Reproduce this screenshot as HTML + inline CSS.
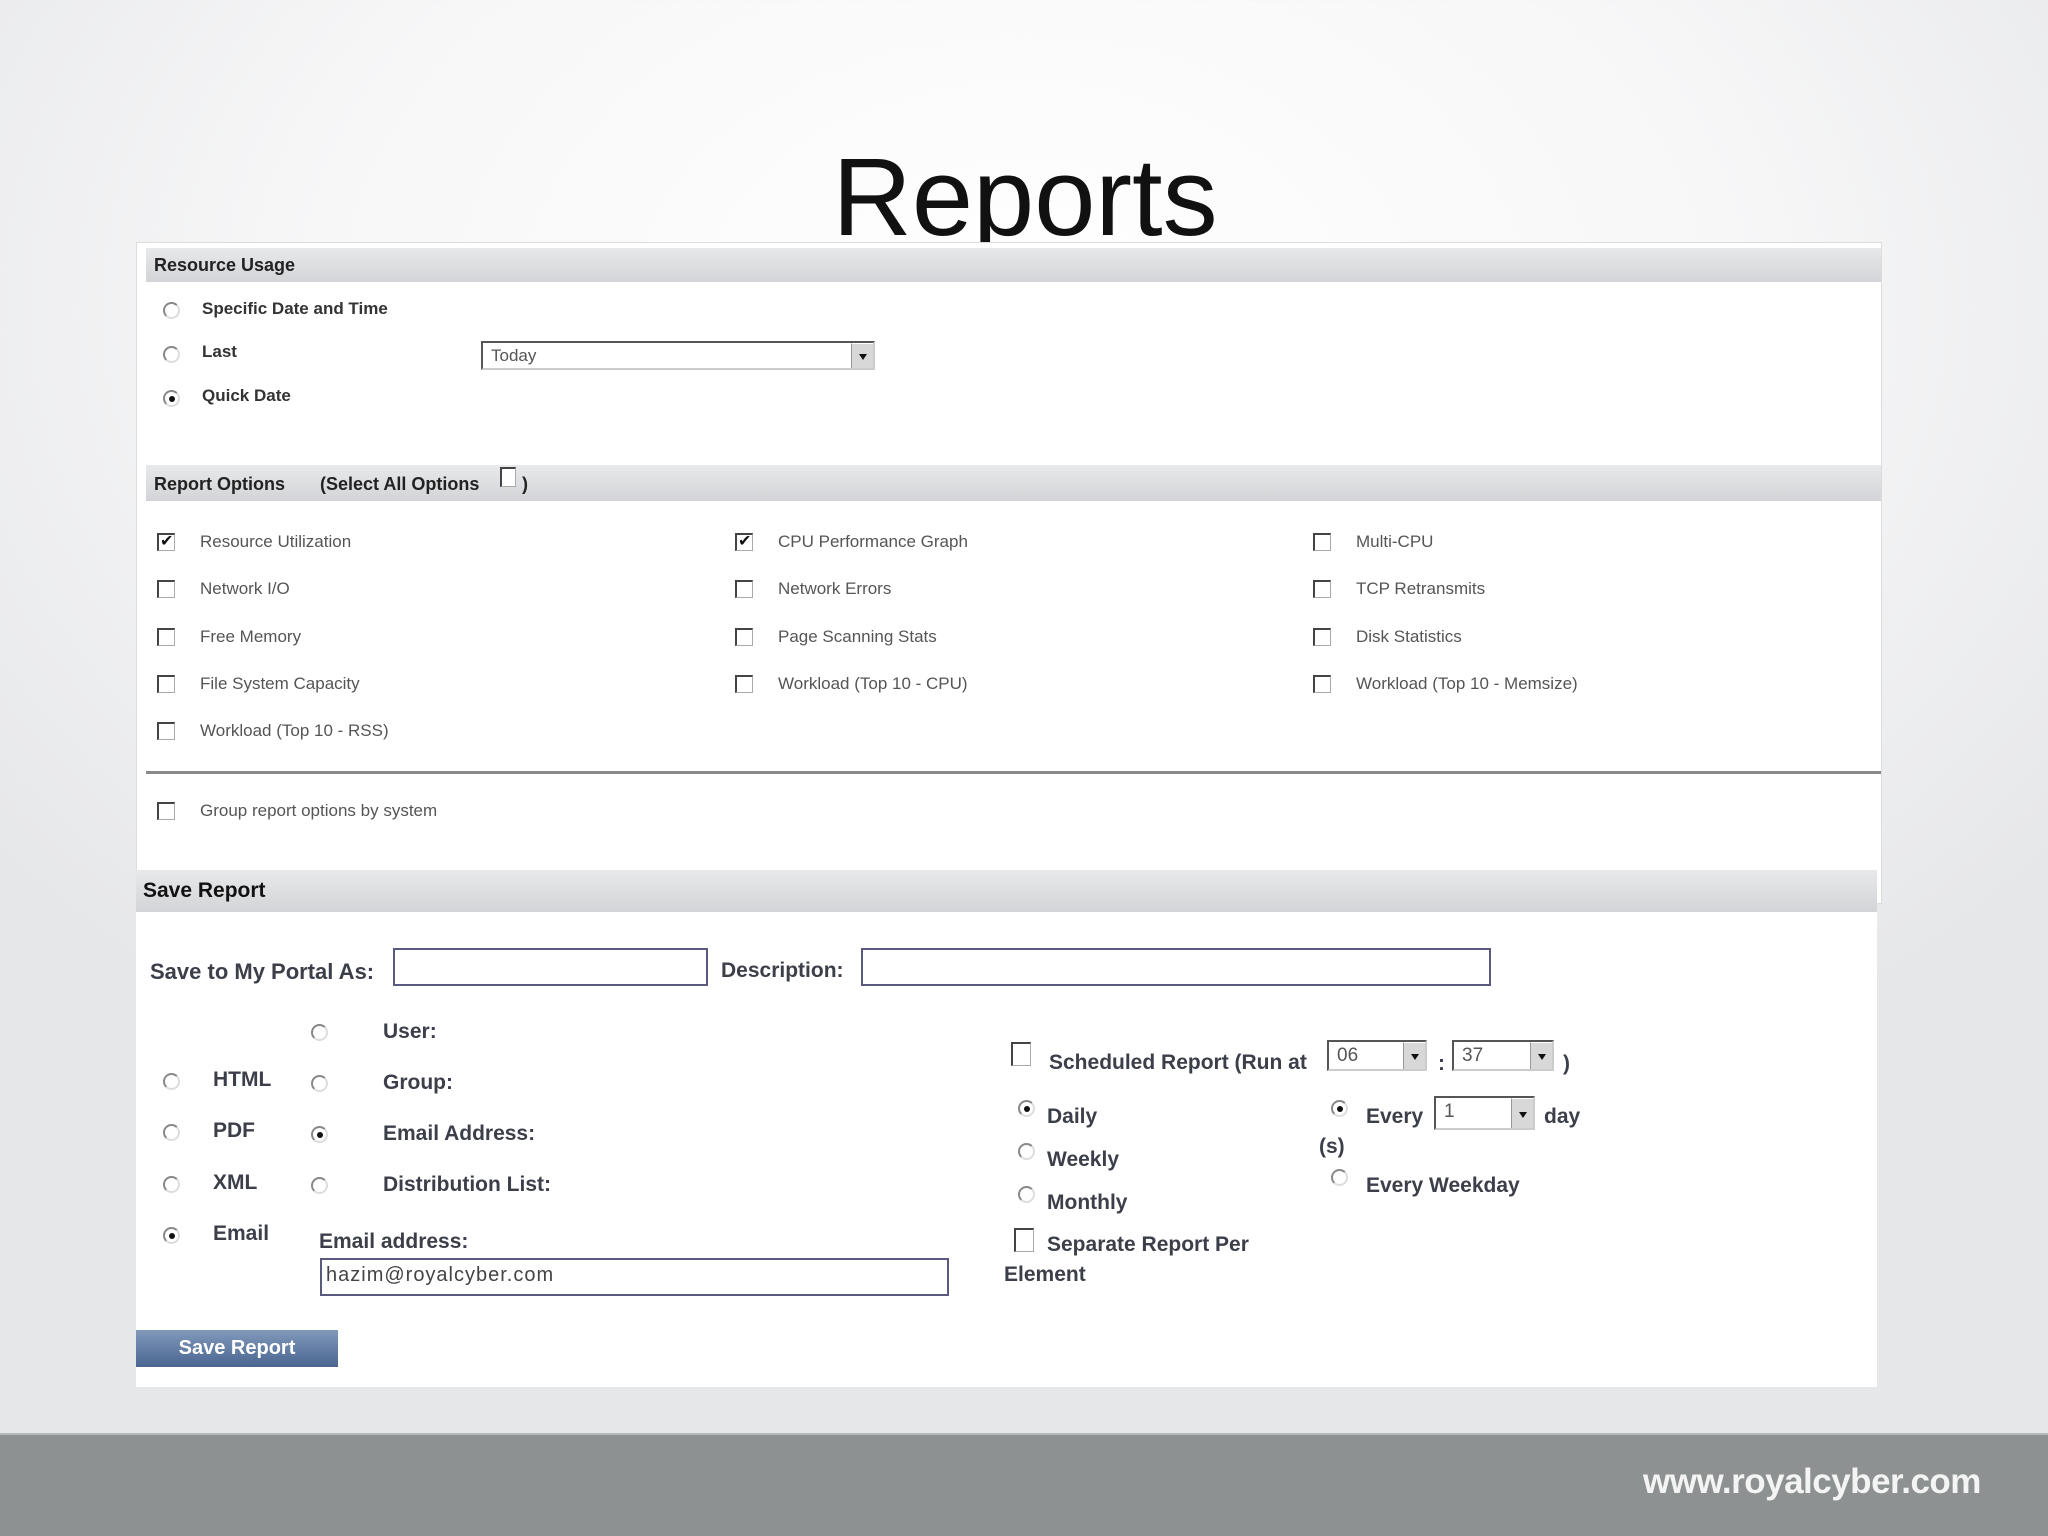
<!DOCTYPE html>
<html><head><meta charset="utf-8"><style>
*{margin:0;padding:0;box-sizing:border-box}
body{width:2048px;height:1536px;position:relative;overflow:hidden;font-family:"Liberation Sans",sans-serif;
background:radial-gradient(ellipse 1300px 900px at 50% 20%,#ffffff 0%,#f7f7f8 55%,#e6e7e9 100%);}
.a{position:absolute;white-space:nowrap}
.title{left:0;width:2050px;text-align:center;top:134px;font-size:110px;color:#111;letter-spacing:0px}
.panel{left:136px;top:242px;width:1746px;height:662px;background:#fff;border:1px solid #dcdcdc}
.save{left:136px;top:870px;width:1741px;height:517px;background:#fff}
.hdr{background:linear-gradient(#e8e9eb,#d3d4d7);}
.h{font-weight:bold;font-size:18px;color:#222}
.t{font-size:17px;color:#555}
.tb{font-size:17px;color:#333;font-weight:bold}
.s{font-size:21px;font-weight:bold;color:#3c3f4a}
.r{width:17px;height:17px;border-radius:50%;border:2px solid #888;border-right-color:#ddd;border-bottom-color:#ddd;background:#fff}
.r.on::after{content:"";position:absolute;left:4px;top:4px;width:6px;height:6px;border-radius:50%;background:#111}
.c{width:18px;height:18px;border:1px solid #aaa;border-top:2px solid #444;border-left:2px solid #444;background:#fff}
.c.on::after{content:"✔";position:absolute;left:1px;top:-4px;font-size:16px;color:#111}
.inp{border:2px solid #5a5a80;background:#fff}
.sel{border:2px solid #555;border-right-color:#ccc;border-bottom-color:#ccc;background:#fff;font-size:19px;color:#555;padding-left:8px}
.sel b{position:absolute;right:0;top:0;bottom:0;width:22px;background:#d8d8d8;border-left:1px solid #999;border-top:1px solid #fff}
.sel b::after{content:"";position:absolute;left:7px;top:50%;margin-top:-2px;border:4px solid transparent;border-top:6px solid #111}
</style></head><body>
<div class="a title">Reports</div>
<div class="a panel"></div>
<div class="a hdr" style="left:146px;top:248px;width:1735px;height:34px"></div>
<div class="a h" style="left:154px;top:255px">Resource Usage</div>
<div class="a r" style="left:163px;top:302px"></div><div class="a tb" style="left:202px;top:299px">Specific Date and Time</div>
<div class="a r" style="left:163px;top:346px"></div><div class="a tb" style="left:202px;top:342px">Last</div>
<div class="a r on" style="left:163px;top:390px"></div><div class="a tb" style="left:202px;top:386px">Quick Date</div>
<div class="a sel" style="left:481px;top:341px;width:394px;height:29px;font-size:17px;line-height:25px">Today<b></b></div>

<div class="a hdr" style="left:146px;top:465px;width:1735px;height:36px"></div>
<div class="a h" style="left:154px;top:474px">Report Options</div>
<div class="a h" style="left:320px;top:474px">(Select All Options</div>
<div class="a h" style="left:522px;top:474px">)</div>
<div class="a c" style="left:500px;top:467px;width:16px;height:20px"></div>

<div class="a c on" style="left:157px;top:533px"></div><div class="a t" style="left:200px;top:532px">Resource Utilization</div>
<div class="a c on" style="left:735px;top:533px"></div><div class="a t" style="left:778px;top:532px">CPU Performance Graph</div>
<div class="a c" style="left:1313px;top:533px"></div><div class="a t" style="left:1356px;top:532px">Multi-CPU</div>
<div class="a c" style="left:157px;top:580px"></div><div class="a t" style="left:200px;top:579px">Network I/O</div>
<div class="a c" style="left:735px;top:580px"></div><div class="a t" style="left:778px;top:579px">Network Errors</div>
<div class="a c" style="left:1313px;top:580px"></div><div class="a t" style="left:1356px;top:579px">TCP Retransmits</div>
<div class="a c" style="left:157px;top:628px"></div><div class="a t" style="left:200px;top:627px">Free Memory</div>
<div class="a c" style="left:735px;top:628px"></div><div class="a t" style="left:778px;top:627px">Page Scanning Stats</div>
<div class="a c" style="left:1313px;top:628px"></div><div class="a t" style="left:1356px;top:627px">Disk Statistics</div>
<div class="a c" style="left:157px;top:675px"></div><div class="a t" style="left:200px;top:674px">File System Capacity</div>
<div class="a c" style="left:735px;top:675px"></div><div class="a t" style="left:778px;top:674px">Workload (Top 10 - CPU)</div>
<div class="a c" style="left:1313px;top:675px"></div><div class="a t" style="left:1356px;top:674px">Workload (Top 10 - Memsize)</div>
<div class="a c" style="left:157px;top:722px"></div><div class="a t" style="left:200px;top:721px">Workload (Top 10 - RSS)</div>
<div class="a" style="left:146px;top:771px;width:1735px;height:3px;background:#8a8a8a"></div>
<div class="a c" style="left:157px;top:802px"></div><div class="a t" style="left:200px;top:801px">Group report options by system</div>

<div class="a save"></div>
<div class="a hdr" style="left:136px;top:870px;width:1741px;height:42px"></div>
<div class="a" style="left:143px;top:879px;font-size:21px;font-weight:bold;color:#111">Save Report</div>
<div class="a s" style="left:150px;top:959px;font-size:22px">Save to My Portal As:</div>
<div class="a inp" style="left:393px;top:948px;width:315px;height:38px"></div>
<div class="a s" style="left:721px;top:959px">Description:</div>
<div class="a inp" style="left:861px;top:948px;width:630px;height:38px"></div>

<div class="a r" style="left:163px;top:1073px"></div><div class="a s" style="left:213px;top:1068px">HTML</div>
<div class="a r" style="left:163px;top:1124px"></div><div class="a s" style="left:213px;top:1119px">PDF</div>
<div class="a r" style="left:163px;top:1176px"></div><div class="a s" style="left:213px;top:1171px">XML</div>
<div class="a r on" style="left:163px;top:1227px"></div><div class="a s" style="left:213px;top:1222px">Email</div>
<div class="a r" style="left:311px;top:1024px"></div><div class="a s" style="left:383px;top:1020px">User:</div>
<div class="a r" style="left:311px;top:1075px"></div><div class="a s" style="left:383px;top:1071px">Group:</div>
<div class="a r on" style="left:311px;top:1126px"></div><div class="a s" style="left:383px;top:1122px">Email Address:</div>
<div class="a r" style="left:311px;top:1177px"></div><div class="a s" style="left:383px;top:1173px">Distribution List:</div>
<div class="a s" style="left:319px;top:1230px">Email address:</div>
<div class="a inp" style="left:320px;top:1258px;width:629px;height:38px;border-width:2px;font-size:20px;color:#444;padding:4px 0 0 4px;letter-spacing:1px">hazim@royalcyber.com</div>
<div class="a" style="left:136px;top:1330px;width:202px;height:37px;background:linear-gradient(#8099bb,#4a6590);color:#fff;font-weight:bold;font-size:20px;text-align:center;line-height:37px">Save Report</div>

<div class="a c" style="left:1011px;top:1042px;width:20px;height:24px"></div>
<div class="a s" style="left:1049px;top:1051px">Scheduled Report (Run at</div>
<div class="a sel" style="left:1327px;top:1040px;width:100px;height:31px;line-height:27px">06<b></b></div>
<div class="a s" style="left:1438px;top:1052px">:</div>
<div class="a sel" style="left:1452px;top:1040px;width:102px;height:31px;line-height:27px">37<b></b></div>
<div class="a s" style="left:1563px;top:1052px">)</div>
<div class="a r on" style="left:1018px;top:1100px"></div><div class="a s" style="left:1047px;top:1105px">Daily</div>
<div class="a r" style="left:1018px;top:1143px"></div><div class="a s" style="left:1047px;top:1148px">Weekly</div>
<div class="a r" style="left:1018px;top:1186px"></div><div class="a s" style="left:1047px;top:1191px">Monthly</div>
<div class="a c" style="left:1014px;top:1228px;width:20px;height:24px"></div><div class="a s" style="left:1047px;top:1233px">Separate Report Per</div>
<div class="a s" style="left:1004px;top:1263px">Element</div>
<div class="a r on" style="left:1331px;top:1100px"></div><div class="a s" style="left:1366px;top:1105px">Every</div>
<div class="a sel" style="left:1434px;top:1096px;width:101px;height:34px;line-height:28px">1<b></b></div>
<div class="a s" style="left:1544px;top:1105px">day</div>
<div class="a s" style="left:1319px;top:1135px">(s)</div>
<div class="a r" style="left:1331px;top:1169px"></div><div class="a s" style="left:1366px;top:1174px">Every Weekday</div>

<div class="a" style="left:0;top:1433px;width:2048px;height:103px;background:#8d9191;border-top:2px solid #b5b8b8"></div>
<div class="a" style="left:1643px;top:1462px;font-size:35px;font-weight:bold;color:#f4f4f4;letter-spacing:-0.5px">www.royalcyber.com</div>
</body></html>
